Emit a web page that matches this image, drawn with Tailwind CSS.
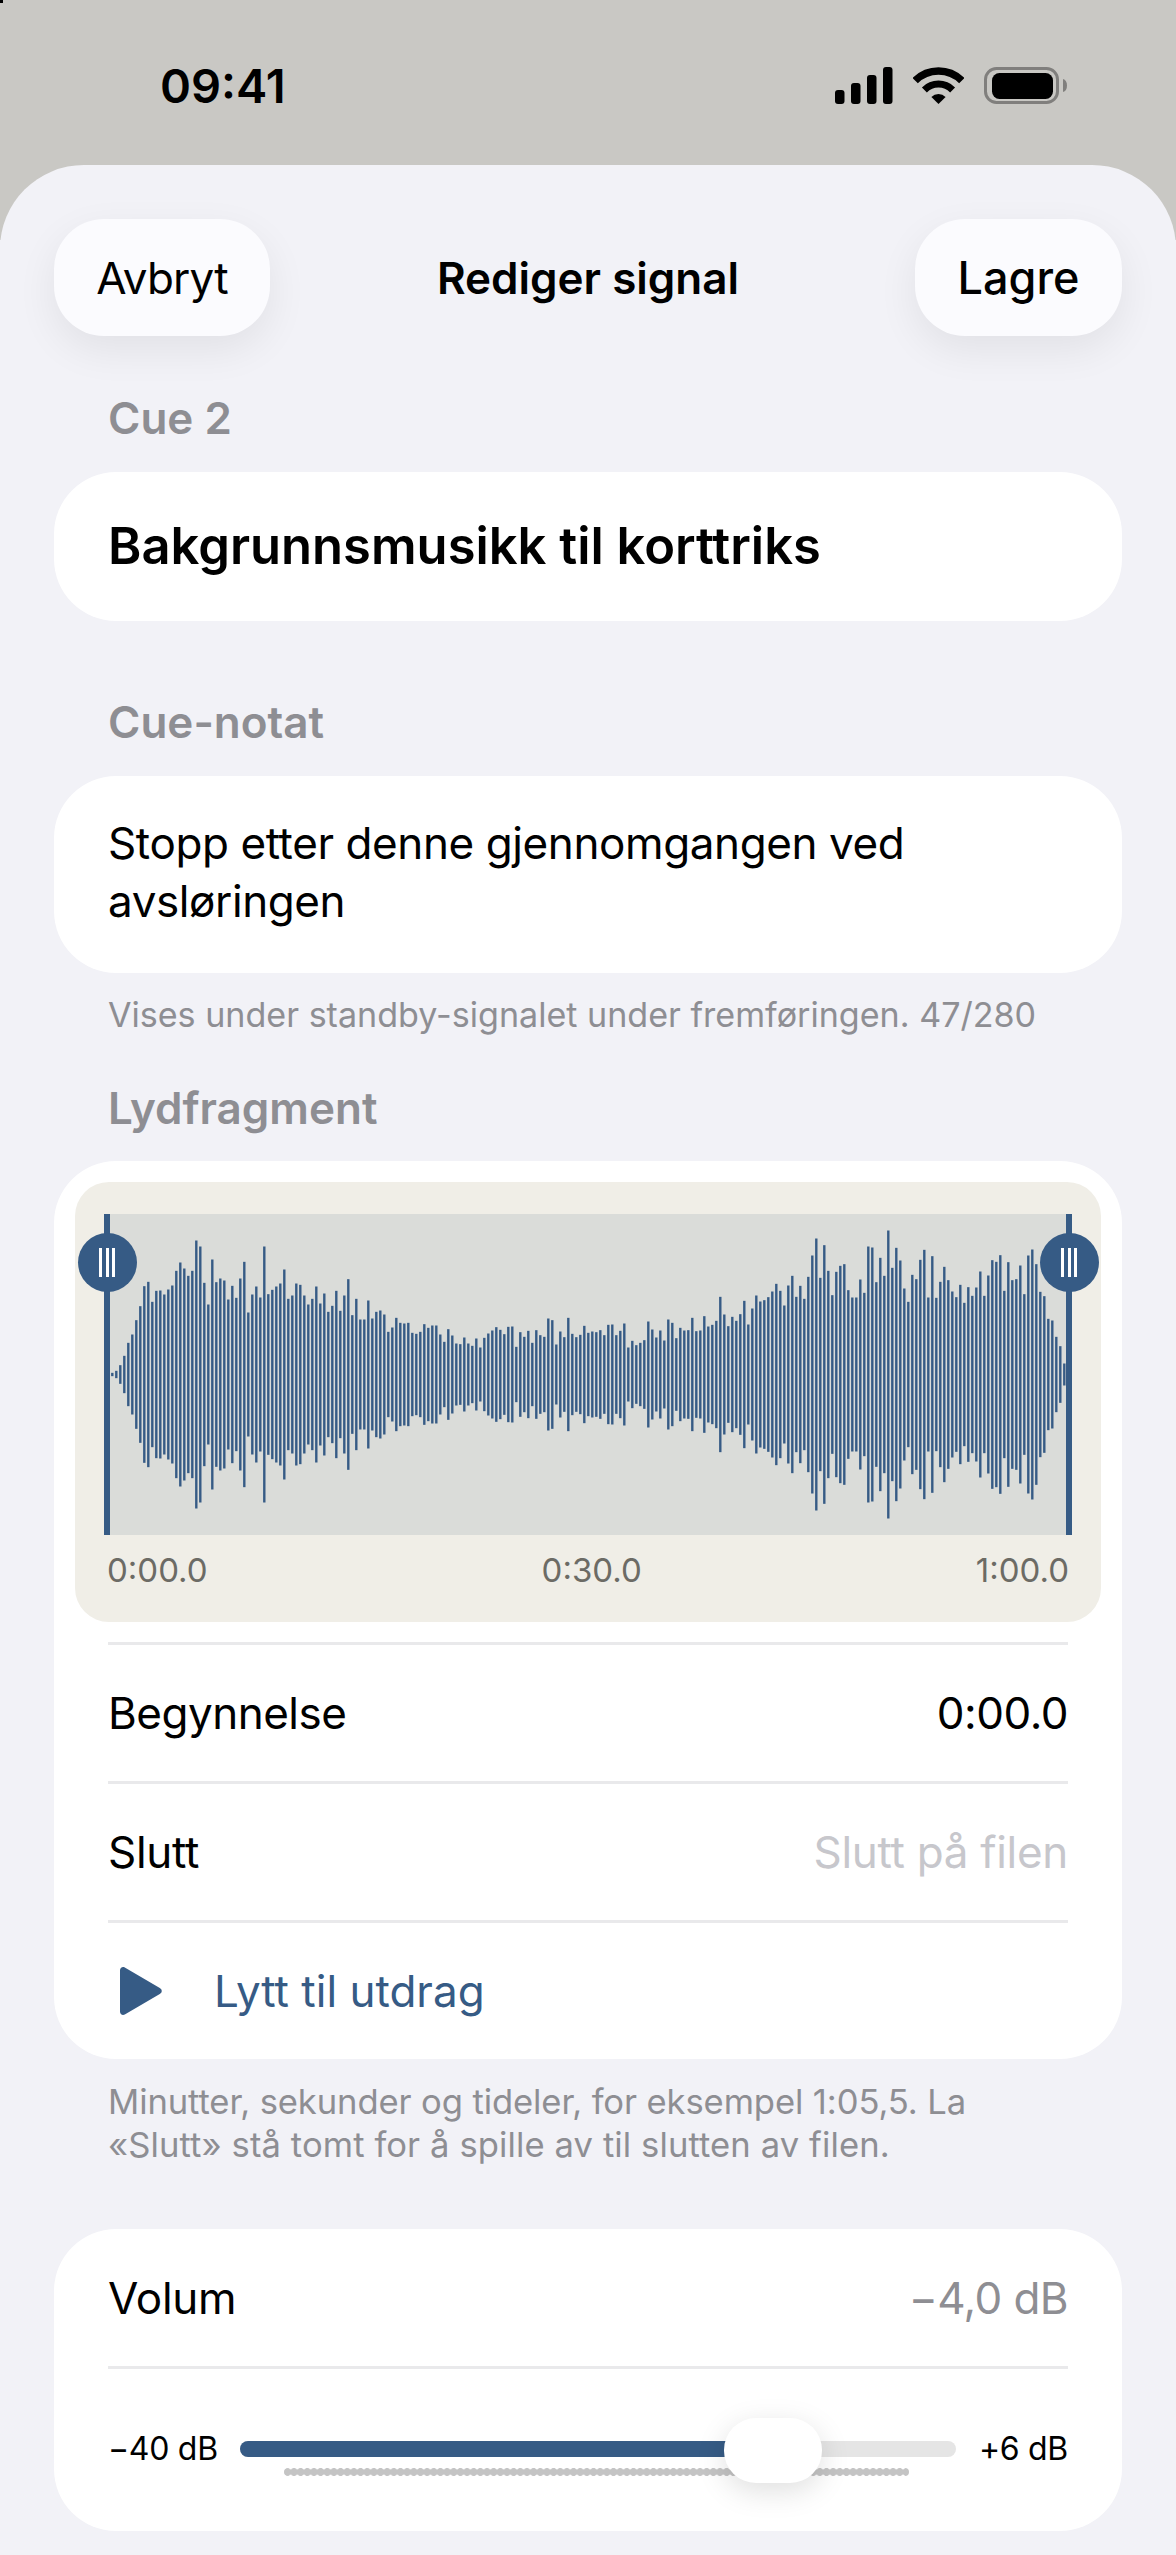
<!DOCTYPE html>
<html lang="nb">
<head>
  <meta charset="UTF-8" />
  <meta name="viewport" content="width=device-width, initial-scale=1.0" />
  <title>Rediger signal</title>
  <script src="https://cdn.jsdelivr.net/npm/@tailwindcss/browser@4"></script>
</head>
<body class="relative bg-[#f2f2f7] text-black font-[Inter,sans-serif] overflow-hidden h-[2555px]">
  <div class="absolute top-0 left-0 w-[3px] h-[3px] bg-black"></div>

  <!-- Status bar -->
  <div class="h-[240px] -mb-[75px] bg-[#c9c8c4] flex items-start justify-between pl-[160px] pr-[109px] pt-[67px]">
    <span class="text-[47px] leading-[37px] font-semibold">09:41</span>
    <div class="flex gap-[20px]">
      <svg width="58" height="37" viewBox="0 0 58 37" fill="#000">
        <rect x="0" y="23" width="9.5" height="14" rx="3"/>
        <rect x="16" y="16" width="9.5" height="21" rx="3"/>
        <rect x="32" y="8" width="9.5" height="29" rx="3"/>
        <rect x="48" y="0" width="9.5" height="37" rx="3"/>
      </svg>
      <svg width="51" height="37" viewBox="0 0 51 37">
        <path d="M2.2 13.7A33 33 0 0 1 48.8 13.7" fill="none" stroke="#000" stroke-width="7.5"/>
        <path d="M11.4 22.9A20 20 0 0 1 39.6 22.9" fill="none" stroke="#000" stroke-width="7"/>
        <path d="M25.5 37L18.4 29.9A10 10 0 0 1 32.6 29.9Z" fill="#000"/>
      </svg>
      <svg width="83" height="37" viewBox="0 0 83 37">
        <rect x="1.5" y="1.5" width="72" height="34" rx="11" fill="none" stroke="#807f7d" stroke-width="3"/>
        <rect x="8" y="6" width="61" height="26" rx="7.5" fill="#000"/>
        <path d="M79 12c2.5 .5 4 3 4 6.500s-1.500 6-4 6.500z" fill="#807f7d"/>
      </svg>
    </div>
  </div>

  <!-- Sheet -->
  <main class="relative bg-[#f2f2f7] rounded-t-[84px] pt-[54px] px-[54px] h-[2390px]">
    <!-- Nav -->
    <header class="grid grid-cols-[1fr_auto_1fr] items-center">
      <button class="justify-self-start w-[216px] h-[117px] rounded-[50px] bg-[#fbfbfe] text-[44px] tracking-[-0.8px] shadow-[0_14px_40px_rgba(0,0,0,0.07)]">Avbryt</button>
      <h1 class="text-[44px] font-semibold">Rediger signal</h1>
      <button class="justify-self-end w-[207px] h-[117px] rounded-[50px] bg-[#fbfbfe] text-[45px] font-medium shadow-[0_14px_40px_rgba(0,0,0,0.07)]">Lagre</button>
    </header>

    <h2 class="mt-[52px] h-[60px] leading-[60px] pl-[54px] text-[44px] font-semibold text-[#8e8e93]">Cue 2</h2>
    <div class="mt-[24px] h-[149px] rounded-[62px] bg-white flex items-center px-[54px] text-[50.700px] font-semibold">Bakgrunnsmusikk til korttriks</div>

    <h2 class="mt-[71px] h-[60px] leading-[60px] pl-[54px] text-[44px] font-semibold text-[#8e8e93]">Cue-notat</h2>
    <div class="mt-[24px] h-[197px] pb-[6px] rounded-[62px] bg-white flex items-center px-[54px] text-[44px] tracking-[-0.4px] leading-[58px]">Stopp etter denne gjennomgangen ved avsløringen</div>
    <p class="mt-[20px] h-[44px] leading-[44px] pl-[54px] text-[34.100px] text-[#8e8e93]">Vises under standby-signalet under fremføringen. 47/280</p>

    <h2 class="mt-[41px] h-[60px] leading-[60px] pl-[54px] text-[44px] font-semibold text-[#8e8e93]">Lydfragment</h2>
    <section class="mt-[23px] rounded-[62px] bg-white pt-[21px]">
      <!-- Waveform -->
      <div class="mx-[21px] h-[440px] rounded-[34px] bg-[#f0eee7] px-[29px] pt-[32px]">
        <div class="relative h-[321px] bg-[#dadcd9]">
          <svg id="wave" class="block" width="968" height="321" viewBox="0 0 968 321" fill="#365b85"></svg>
          <div class="absolute left-[-26.500px] top-[18.500px] w-[59px] h-[59px] rounded-full bg-[#365b85] flex items-center justify-center gap-[3.500px]">
            <span class="w-[3px] h-[29px] bg-white"></span><span class="w-[3px] h-[29px] bg-white"></span><span class="w-[3px] h-[29px] bg-white"></span>
          </div>
          <div class="absolute right-[-26.500px] top-[18.500px] w-[59px] h-[59px] rounded-full bg-[#365b85] flex items-center justify-center gap-[3.500px]">
            <span class="w-[3px] h-[29px] bg-white"></span><span class="w-[3px] h-[29px] bg-white"></span><span class="w-[3px] h-[29px] bg-white"></span>
          </div>
        </div>
        <div class="mt-[17px] pl-[3px] pr-[3px] flex justify-between text-[33px] leading-[36px] text-[#6c6b65]">
          <span>0:00.0</span><span>0:30.0</span><span>1:00.0</span>
        </div>
      </div>

      <div class="mt-[20px] mx-[54px] h-[3px] bg-[#e9e9eb]"></div>
      <div class="h-[136px] px-[54px] flex items-center justify-between text-[44px] tracking-[-0.5px]">
        <span>Begynnelse</span><span>0:00.0</span>
      </div>
      <div class="mx-[54px] h-[3px] bg-[#e9e9eb]"></div>
      <div class="h-[136px] px-[54px] flex items-center justify-between text-[44px] tracking-[-0.3px]">
        <span>Slutt</span><span class="text-[#c7c7cc]">Slutt på filen</span>
      </div>
      <div class="mx-[54px] h-[3px] bg-[#e9e9eb]"></div>
      <div class="h-[136px] pl-[66px] flex items-center text-[44px] text-[#365b85]">
        <svg width="42" height="48" viewBox="0 0 42 48" fill="#365b85"><path d="M0 3.500C0 .8 2.500-.8 4.800 .5L39.800 21c2.600 1.500 2.600 4.500 0 6L4.800 47.500C2.500 48.800 0 47.200 0 44.500Z"/></svg>
        <span class="ml-[52px]">Lytt til utdrag</span>
      </div>
    </section>
    <p class="mt-[21px] pl-[54px] pr-[54px] text-[34.600px] leading-[43px] text-[#8e8e93]"><span class="tracking-[-0.1px]">Minutter, sekunder og tideler, for eksempel 1:05,5. La</span><br><span class="tracking-[0.1px]">«Slutt» stå tomt for å spille av til slutten av filen.</span></p>

    <!-- Volume -->
    <section class="mt-[63px] h-[302px] rounded-[62px] bg-white">
      <div class="h-[137px] px-[54px] flex items-center justify-between text-[44px] tracking-[-0.3px]">
        <span>Volum</span><span class="text-[#8e8e93] tracking-[-0.6px]">−4,0 dB</span>
      </div>
      <div class="mx-[54px] h-[3px] bg-[#e9e9eb]"></div>
      <div class="mt-[50px] h-[60px] px-[54px] flex items-center justify-between text-[32px] tracking-[-0.3px]">
        <span>−40 dB</span>
        <div class="relative w-[716px] h-[16px] rounded-full bg-[#e5e5e5]">
          <div class="h-full w-[490px] rounded-l-full bg-[#365b85]"></div>
          <div class="absolute left-[44px] top-[27px] w-[625px] h-[8px] rounded-full bg-[radial-gradient(circle,#c4c4c4_3.600px,transparent_4.200px)] bg-[length:6.670px_8px]"></div>
          <div class="absolute left-[484px] top-[-23px] w-[98px] h-[65px] rounded-[32px] bg-white shadow-[0_8px_30px_rgba(0,0,0,0.13)]"></div>
        </div>
        <span>+6 dB</span>
      </div>
    </section>
  </main>

  <script>
    // bar tops as traced at 3x, mirrored around the centre line at 643
    var tops = [638,632,615,587,548,523,480,438,378,365,425,392,391,403,388,376,332,307,325,347,332,241,259,368,433,298,366,355,361,418,377,413,355,305,457,403,379,412,259,402,389,379,370,328,416,406,370,374,406,433,416,379,430,400,455,437,392,452,406,357,465,416,478,478,421,475,455,451,463,515,502,473,488,490,488,518,521,515,492,503,496,496,523,545,507,526,550,552,532,550,557,535,562,533,520,511,501,509,522,500,499,560,516,530,512,548,510,525,530,475,480,553,
      514,531,473,521,531,524,497,518,514,516,
      510,525,494,493,525,512,490,562,542,555,548,540,484,508,532,511,541,478,488,534,503,511,510,473,513,511,468,499,494,482,410,463,498,470,482,462,422,493,445,406,424,420,411,394,371,392,436,376,347,410,377,416,350,286,235,353,255,332,405,335,317,312,390,412,412,358,398,259,262,366,293,347,211,323,263,301,385,425,344,357,299,269,412,288,413,365,320,360,394,411,374,428,381,407,382,334,407,346,300,305,285,392,306,360,357,316,402,286,268,312,395,408,476,481,530,558,610];
    var svg = '<rect width="6" height="321"/><rect x="962" width="6" height="321"/>';
    tops.forEach(function (t, i) {
      var half = (643 - t) / 3;
      svg += '<rect x="' + (7.1 + 4 * i) + '" y="' + (160.5 - half) + '" width="2.400" height="' + (half * 2) + '"/>';
    });
    document.getElementById('wave').innerHTML = svg;
  </script>
</body>
</html>
